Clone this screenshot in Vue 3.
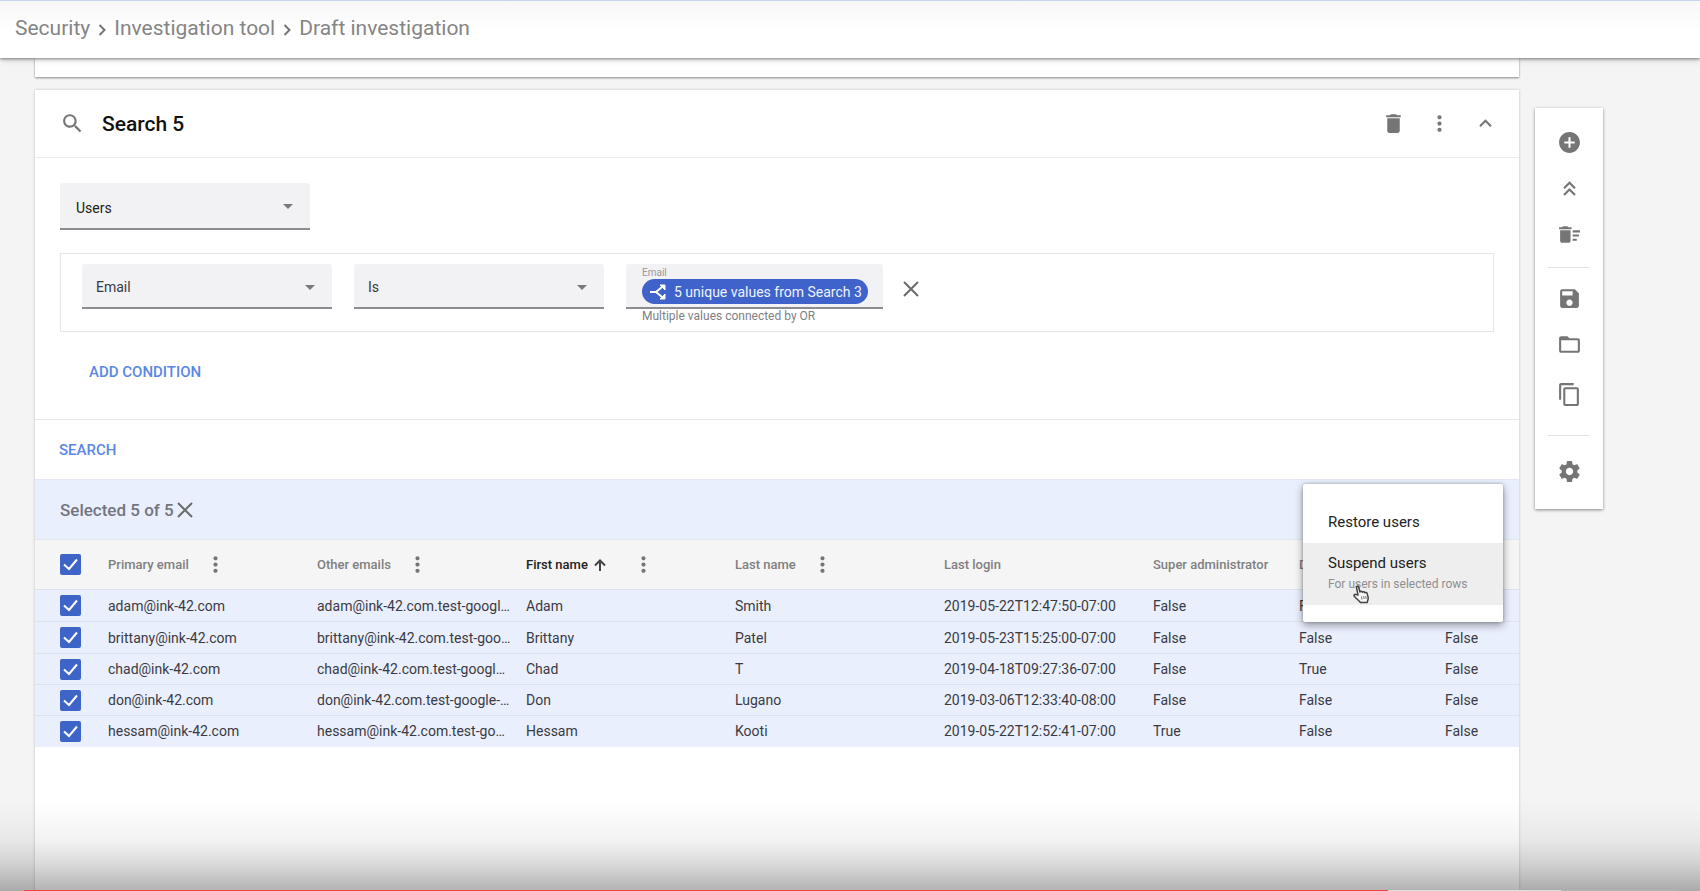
<script setup>
import { ref, computed } from 'vue'

const columns = [
  { key: 'primary', label: 'Primary email', menu: true },
  { key: 'other', label: 'Other emails', menu: true },
  { key: 'first', label: 'First name', menu: true, sorted: true },
  { key: 'last', label: 'Last name', menu: true },
  { key: 'login', label: 'Last login' },
  { key: 'admin', label: 'Super administrator' },
  { key: 'disabled', label: 'D' },
  { key: 'extra', label: '' },
]

const rows = ref([
  { primary: 'adam@ink-42.com', other: 'adam@ink-42.com.test-googl…', first: 'Adam', last: 'Smith', login: '2019-05-22T12:47:50-07:00', admin: 'False', disabled: 'False', extra: 'False', checked: true },
  { primary: 'brittany@ink-42.com', other: 'brittany@ink-42.com.test-goo…', first: 'Brittany', last: 'Patel', login: '2019-05-23T15:25:00-07:00', admin: 'False', disabled: 'False', extra: 'False', checked: true },
  { primary: 'chad@ink-42.com', other: 'chad@ink-42.com.test-googl…', first: 'Chad', last: 'T', login: '2019-04-18T09:27:36-07:00', admin: 'False', disabled: 'True', extra: 'False', checked: true },
  { primary: 'don@ink-42.com', other: 'don@ink-42.com.test-google-…', first: 'Don', last: 'Lugano', login: '2019-03-06T12:33:40-08:00', admin: 'False', disabled: 'False', extra: 'False', checked: true },
  { primary: 'hessam@ink-42.com', other: 'hessam@ink-42.com.test-go…', first: 'Hessam', last: 'Kooti', login: '2019-05-22T12:52:41-07:00', admin: 'True', disabled: 'False', extra: 'False', checked: true },
])

const selected = computed(() => rows.value.filter((r) => r.checked).length)
const allChecked = computed({
  get: () => selected.value === rows.value.length,
  set: (v) => rows.value.forEach((r) => (r.checked = v)),
})

const tools = [
  [
    { name: 'Add search', d: 'M12 2C6.48 2 2 6.48 2 12s4.48 10 10 10 10-4.48 10-10S17.52 2 12 2zm5 11h-4v4h-2v-4H7v-2h4V7h2v4h4v2z' },
    { name: 'Collapse all', d: 'M6 17.59L7.41 19 12 14.42 16.59 19 18 17.59l-6-6zM6 11l1.41 1.41L12 7.83l4.59 4.58L18 11l-6-6z' },
    { name: 'Delete all', d: 'M15 16h4v2h-4zm0-8h7v2h-7zm0 4h6v2h-6zM3 18c0 1.100.9 2 2 2h6c1.100 0 2-.9 2-2V8H3v10zM14 5h-3l-1-1H6L5 5H2v2h12z' },
  ],
  [
    { name: 'Save', d: 'M17 3H5c-1.110 0-2 .9-2 2v14c0 1.100.89 2 2 2h14c1.100 0 2-.9 2-2V7l-4-4zm-5 16c-1.660 0-3-1.340-3-3s1.340-3 3-3 3 1.340 3 3-1.340 3-3 3zm3-10H5V5h10v4z' },
    { name: 'Open', d: 'M20 6h-8l-2-2H4c-1.100 0-1.990.9-1.990 2L2 18c0 1.100.9 2 2 2h16c1.100 0 2-.9 2-2V8c0-1.100-.9-2-2-2zm0 12H4V8h16v10z' },
    { name: 'Duplicate', low: true, d: 'M16 1H4c-1.100 0-2 .9-2 2v14h2V3h12V1zm3 4H8c-1.100 0-2 .9-2 2v14c0 1.100.9 2 2 2h11c1.100 0 2-.9 2-2V7c0-1.100-.9-2-2-2zm0 16H8V7h11v14z' },
  ],
  [
    { name: 'Settings', d: 'M19.430 12.980c.04-.32.07-.64.07-.98s-.03-.66-.07-.98l2.110-1.650c.19-.15.24-.42.12-.64l-2-3.460c-.12-.22-.39-.3-.61-.22l-2.490 1c-.52-.4-1.080-.73-1.690-.98l-.38-2.650C14.460 2.180 14.250 2 14 2h-4c-.25 0-.46.18-.49.42l-.38 2.650c-.61.25-1.170.59-1.690.98l-2.490-1c-.23-.09-.49 0-.61.22l-2 3.460c-.13.22-.07.49.12.64l2.110 1.650c-.04.32-.07.65-.07.98s.03.66.07.98l-2.110 1.650c-.19.15-.24.42-.12.64l2 3.460c.12.22.39.3.61.22l2.490-1c.52.4 1.080.73 1.690.98l.38 2.650c.03.24.24.42.49.42h4c.25 0 .46-.18.49-.42l.38-2.650c.61-.25 1.170-.59 1.690-.98l2.490 1c.23.09.49 0 .61-.22l2-3.460c.12-.22.07-.49-.12-.64l-2.110-1.650zM12 15.500c-1.930 0-3.500-1.570-3.500-3.500s1.570-3.500 3.500-3.500 3.500 1.570 3.500 3.500-1.570 3.500-3.500 3.500z' },
  ],
]
</script>

<template>
  <div class="page">
    <header class="topbar">
      <nav class="crumbs" aria-label="Breadcrumb">
        <a href="#">Security</a>
        <svg class="sep" viewBox="0 0 8 12"><path d="M1.500 1l5 5-5 5" /></svg>
        <a href="#">Investigation tool</a>
        <svg class="sep" viewBox="0 0 8 12"><path d="M1.500 1l5 5-5 5" /></svg>
        <a href="#">Draft investigation</a>
      </nav>
    </header>

    <div class="body">
      <main class="main">
        <section class="card previous"></section>

        <section class="card">
          <div class="card-head">
            <svg class="icon" viewBox="0 0 24 24"><path d="M15.500 14h-.79l-.28-.27C15.410 12.590 16 11.110 16 9.500 16 5.910 13.090 3 9.500 3S3 5.910 3 9.500 5.910 16 9.500 16c1.610 0 3.090-.59 4.230-1.570l.27.28v.79l5 4.990L20.490 19l-4.990-5zm-6 0C7.010 14 5 11.990 5 9.500S7.010 5 9.500 5 14 7.010 14 9.500 11.990 14 9.500 14z" /></svg>
            <h1>Search 5</h1>
            <div class="head-actions">
              <button class="icon-btn" aria-label="Delete"><svg class="icon" viewBox="0 0 24 24"><path d="M6 19c0 1.100.9 2 2 2h8c1.100 0 2-.9 2-2V7H6v12zM19 4h-3.500l-1-1h-5l-1 1H5v2h14V4z" /></svg></button>
              <button class="icon-btn" aria-label="More"><svg class="icon" viewBox="0 0 24 24"><path d="M12 8c1.100 0 2-.9 2-2s-.9-2-2-2-2 .9-2 2 .9 2 2 2zm0 2c-1.100 0-2 .9-2 2s.9 2 2 2 2-.9 2-2-.9-2-2-2zm0 6c-1.100 0-2 .9-2 2s.9 2 2 2 2-.9 2-2-.9-2-2-2z" /></svg></button>
              <button class="icon-btn" aria-label="Collapse"><svg class="icon" viewBox="0 0 24 24"><path d="M12 8l-6 6 1.410 1.410L12 10.830l4.590 4.580L18 14z" /></svg></button>
            </div>
          </div>

          <div class="query">
            <div class="select source">
              <select aria-label="Data source"><option>Users</option></select>
              <svg class="caret" viewBox="0 0 10 5"><path d="M0 0h10L5 5z" /></svg>
            </div>

            <div class="condition">
              <div class="select">
                <select aria-label="Attribute"><option>Email</option></select>
                <svg class="caret" viewBox="0 0 10 5"><path d="M0 0h10L5 5z" /></svg>
              </div>
              <div class="select">
                <select aria-label="Operator"><option>Is</option></select>
                <svg class="caret" viewBox="0 0 10 5"><path d="M0 0h10L5 5z" /></svg>
              </div>
              <div class="value" role="group" aria-labelledby="value-label">
                <div class="value-box">
                  <span id="value-label" class="value-label">Email</span>
                  <button class="chip">
                    <svg viewBox="0 0 16 16">
                      <path class="line" d="M0 8h6l6-5M6 8l6 5" />
                      <path class="tip" d="M10 1h5v5zM10 15h5v-5z" />
                    </svg>
                    5 unique values from Search 3
                  </button>
                </div>
                <span class="hint">Multiple values connected by OR</span>
              </div>
              <button class="icon-btn remove" aria-label="Remove condition"><svg class="cross" viewBox="0 0 16 16"><path d="M1 1l14 14M15 1L1 15" /></svg></button>
            </div>

            <button class="text-btn add">ADD CONDITION</button>
          </div>

          <div class="search-row">
            <button class="text-btn">SEARCH</button>
          </div>

          <div class="selection">
            <span>Selected {{ selected }} of {{ rows.length }}</span>
            <button class="icon-btn" aria-label="Clear selection" @click="allChecked = false"><svg class="cross" viewBox="0 0 16 16"><path d="M1 1l14 14M15 1L1 15" /></svg></button>

            <div class="menu" role="menu">
              <button class="item" role="menuitem">Restore users</button>
              <button class="item active" role="menuitem">
                Suspend users
                <small>For users in selected rows</small>
              </button>
              <svg class="pointer" viewBox="0 0 17 19">
                <path class="hand" d="M5 10L3.500 2.500C3.200 1 5.200.6 5.600 2L7 7c.3-1 2.200-1 2.500.3.600-.8 2.100-.6 2.400.5.700-.6 2-.3 2.300.8l1 4c.3 1.500-.7 2.700-1 4.900H7.500C6.500 16 4 14.200 1.500 11.500.300 10.200 1.700 8.700 3 9.500z" />
                <path class="crease" d="M8.500 11.500l.4 3M10.700 11l.4 3M12.800 11l.3 3" />
              </svg>
            </div>
          </div>

          <table>
            <colgroup>
              <col class="c-check" />
              <col class="c-wide" span="5" />
              <col class="c-flag" span="2" />
              <col />
            </colgroup>
            <thead>
              <tr>
                <th class="check">
                  <label class="tick">
                    <input v-model="allChecked" type="checkbox" aria-label="Select all rows" />
                    <svg viewBox="0 0 21 21"><path d="M4 10.500l5 4.500 8-9.500" /></svg>
                  </label>
                </th>
                <th v-for="c in columns" :key="c.key" :class="{ sorted: c.sorted }">
                  <div class="th">
                    <span>{{ c.label }}</span>
                    <svg v-if="c.sorted" class="arrow" viewBox="0 0 12 12"><path d="M6 12V1.500M1 6.500l5-5 5 5" /></svg>
                    <button v-if="c.menu" class="icon-btn dots" :aria-label="c.label + ' options'"><svg class="icon" viewBox="0 0 24 24"><path d="M12 8c1.100 0 2-.9 2-2s-.9-2-2-2-2 .9-2 2 .9 2 2 2zm0 2c-1.100 0-2 .9-2 2s.9 2 2 2 2-.9 2-2-.9-2-2-2zm0 6c-1.100 0-2 .9-2 2s.9 2 2 2 2-.9 2-2-.9-2-2-2z" /></svg></button>
                  </div>
                </th>
              </tr>
            </thead>
            <tbody>
              <tr v-for="r in rows" :key="r.primary">
                <td class="check">
                  <label class="tick">
                    <input v-model="r.checked" type="checkbox" :aria-label="'Select ' + r.primary" />
                    <svg viewBox="0 0 21 21"><path d="M4 10.500l5 4.500 8-9.500" /></svg>
                  </label>
                </td>
                <td v-for="c in columns" :key="c.key">{{ r[c.key] }}</td>
              </tr>
            </tbody>
          </table>
        </section>
      </main>

      <aside class="tools">
        <div v-for="(group, i) in tools" :key="i" class="group">
          <button v-for="t in group" :key="t.name" class="icon-btn tool" :class="{ low: t.low }" :aria-label="t.name">
            <svg class="icon" viewBox="0 0 24 24"><path :d="t.d" /></svg>
          </button>
        </div>
      </aside>
    </div>

    <div class="player">
      <div class="track"><div class="played"></div><div class="loaded"></div><div class="rest"></div></div>
    </div>
  </div>
</template>

<style>
body {
  background: #f4f4f4;
}
</style>

<style scoped>
.page {
  position: relative;
  display: flex;
  flex-direction: column;
  min-height: 100vh;
  overflow: hidden;
  font-family: Roboto, "Liberation Sans", sans-serif;
  font-size: 14px;
  color: #3a3b42;
}
*, *::before {
  box-sizing: border-box;
}
button, select {
  font: inherit;
  color: inherit;
  border: 0;
  margin: 0;
  padding: 0;
  background: none;
  text-align: left;
}
.topbar {
  position: relative;
  z-index: 2;
  height: 58px;
  border-top: 1px solid #c6d6f0;
  background: linear-gradient(#f7f7f9, #fff 32px);
  box-shadow: 0 1px 3px rgba(0, 0, 0, 0.45), 0 3px 6px rgba(0, 0, 0, 0.1);
}
.crumbs {
  display: flex;
  align-items: center;
  height: 54px;
  padding-left: 15px;
  font-size: 21px;
}
.crumbs a {
  color: #858585;
  text-decoration: none;
}
.sep {
  width: 8px;
  height: 12px;
  margin: 3px 8px 0;
}
.sep path {
  fill: none;
  stroke: #757575;
  stroke-width: 2;
}
.body {
  display: flex;
  flex: 1;
  align-items: flex-start;
  gap: 16px;
  padding: 0 97px 0 35px;
}
.main {
  flex: 1;
  min-width: 0;
  align-self: stretch;
  display: flex;
  flex-direction: column;
  gap: 13px;
}
.card {
  flex: 1;
  background: #fff;
  box-shadow: 0 0 3px rgba(0, 0, 0, 0.2);
}
.card.previous {
  flex: none;
  height: 19px;
  box-shadow: 0 1px 2px rgba(0, 0, 0, 0.45);
}
.icon {
  display: block;
  width: 25px;
  height: 25px;
  fill: #757575;
}
.icon-btn {
  display: flex;
  align-items: center;
  justify-content: center;
}
.card-head {
  display: flex;
  align-items: center;
  height: 68px;
  padding: 0 21px 0 25px;
  border-bottom: 1px solid #ececee;
}
h1 {
  margin: 0 0 0 17px;
  font-size: 21px;
  font-weight: 500;
  color: #111;
}
.head-actions {
  display: flex;
  gap: 21px;
  margin-left: auto;
}
.query {
  padding: 25px 25px 35px;
  border-bottom: 1px solid #e8e8ea;
}
.select {
  position: relative;
  width: 250px;
  height: 45px;
}
.source {
  height: 47px;
}
.select select {
  appearance: none;
  width: 100%;
  height: 100%;
  padding: 2px 40px 0 14px;
  border-bottom: 2px solid #8c8c90;
  border-radius: 3px 3px 0 0;
  background: #f2f1f4;
}
.source select {
  padding: 5px 40px 0 16px;
  color: #222;
}
.caret {
  position: absolute;
  top: 21px;
  right: 17px;
  width: 10px;
  height: 5px;
  fill: #7a7a7a;
  pointer-events: none;
}
.condition {
  display: flex;
  gap: 22px;
  height: 79px;
  margin-top: 23px;
  padding: 10px 21px;
  border: 1px solid #e6e6e8;
}
.value {
  width: 257px;
  margin-right: -2px;
}
.value-box {
  height: 45px;
  padding: 2px 16px 0;
  border-bottom: 2px solid #8c8c90;
  border-radius: 3px 3px 0 0;
  background: #f2f1f4;
}
.value-label {
  display: block;
  font-size: 10px;
  line-height: 13px;
  color: #98989c;
}
.chip {
  display: flex;
  align-items: center;
  gap: 8px;
  height: 25px;
  padding: 0 6px 0 8px;
  border-radius: 13px;
  background: #3f63cb;
  color: #eef2fd;
  white-space: nowrap;
}
.chip svg {
  width: 16px;
  height: 16px;
}
.line {
  fill: none;
  stroke: #fff;
  stroke-width: 2;
}
.tip {
  fill: #fff;
  stroke: #fff;
}
.hint {
  display: block;
  padding-left: 16px;
  font-size: 12px;
  line-height: 14px;
  color: #808084;
}
.remove {
  align-self: flex-start;
  height: 50px;
}
.cross {
  width: 16px;
  height: 16px;
}
.cross path {
  fill: none;
  stroke: #6a6a6e;
  stroke-width: 2;
}
.text-btn {
  font-size: 15px;
  font-weight: 500;
  color: #5b87e6;
}
.add {
  display: block;
  margin: 28px 0 0 29px;
  line-height: 24px;
}
.search-row {
  display: flex;
  align-items: center;
  height: 59px;
  padding-left: 24px;
}
.selection {
  position: relative;
  display: flex;
  align-items: center;
  gap: 3px;
  height: 60px;
  padding-left: 25px;
  border-top: 1px solid #e4e8f4;
  background: #eaeffe;
  font-size: 17px;
  font-weight: 500;
  color: #73757e;
}
.menu {
  position: absolute;
  z-index: 3;
  top: 4px;
  right: 16px;
  width: 200px;
  padding: 17px 0;
  border-radius: 2px;
  background: #fff;
  box-shadow: 0 3px 8px rgba(0, 0, 0, 0.4), 0 0 3px rgba(0, 0, 0, 0.25);
}
.item {
  display: block;
  width: 100%;
  padding: 0 25px;
  font-size: 15px;
  font-weight: 400;
  line-height: 42px;
  color: #222;
}
.item.active {
  height: 62px;
  padding-bottom: 1px;
  line-height: 21px;
  background: #eee;
}
.item small {
  display: block;
  font-size: 12px;
  line-height: 20px;
  color: #8e8e8e;
}
.pointer {
  position: absolute;
  top: 101px;
  left: 50px;
  width: 17px;
  height: 19px;
}
.hand {
  fill: #f6f6f6;
  stroke: #444;
  stroke-width: 1.5;
  stroke-linejoin: round;
}
.crease {
  fill: none;
  stroke: #777;
}
table {
  width: 100%;
  table-layout: fixed;
  border-collapse: collapse;
}
.c-check {
  width: 73px;
}
.c-wide {
  width: 209px;
}
.c-flag {
  width: 146px;
}
th, td {
  padding: 0;
  text-align: left;
  white-space: nowrap;
}
th {
  height: 50px;
  border-top: 1px solid #e2e6ee;
  background: #f5f5f5;
  font-size: 13px;
  font-weight: 500;
  color: #808080;
}
th.sorted {
  color: #222;
}
.th {
  display: flex;
  align-items: center;
}
.dots {
  margin-left: 14px;
}
.arrow {
  width: 12px;
  height: 12px;
  margin: 0 11px 0 6px;
}
.arrow path {
  fill: none;
  stroke: #444;
  stroke-width: 2;
}
td {
  height: 32px;
  border-top: 1px solid #dde2f0;
  background: #eaeffe;
}
tbody tr:nth-child(n + 3) td {
  height: 31px;
}
.check {
  padding-left: 25px;
}
.tick {
  position: relative;
  display: block;
  width: 21px;
  height: 21px;
}
.tick input {
  appearance: none;
  display: block;
  width: 21px;
  height: 21px;
  margin: 0;
  border: 2px solid #3e64c8;
  border-radius: 2px;
}
.tick input:checked {
  background: #3e64c8;
}
.tick svg {
  position: absolute;
  inset: 0;
  pointer-events: none;
}
.tick path {
  fill: none;
  stroke: #fff;
  stroke-width: 2;
}
.tools {
  width: 68px;
  margin-top: 50px;
  padding: 11px 13px 15px;
  background: #fff;
  box-shadow: 0 1px 3px rgba(0, 0, 0, 0.45);
}
.group + .group {
  margin-top: 10px;
  padding-top: 7px;
  border-top: 1px solid #e2e2e2;
}
.group:last-child {
  margin-top: 18px;
  padding-top: 12px;
}
.tool {
  width: 100%;
  height: 46px;
}
.low {
  margin-top: 4px;
}
.player {
  position: absolute;
  z-index: 5;
  right: 0;
  bottom: 0;
  left: 0;
  display: flex;
  align-items: flex-end;
  height: 96px;
  padding: 0 24px;
  background: linear-gradient(transparent, rgba(0, 0, 0, 0.01) 18%, rgba(0, 0, 0, 0.05) 47%, rgba(0, 0, 0, 0.14) 71%, rgba(0, 0, 0, 0.3));
  pointer-events: none;
}
.track {
  display: flex;
  flex: 1;
  height: 1px;
}
.played {
  flex: 1364;
  background: #f0443a;
}
.loaded {
  flex: 173;
  background: #dcdcdc;
}
.rest {
  flex: 115;
  background: #b4b4b4;
}
</style>
